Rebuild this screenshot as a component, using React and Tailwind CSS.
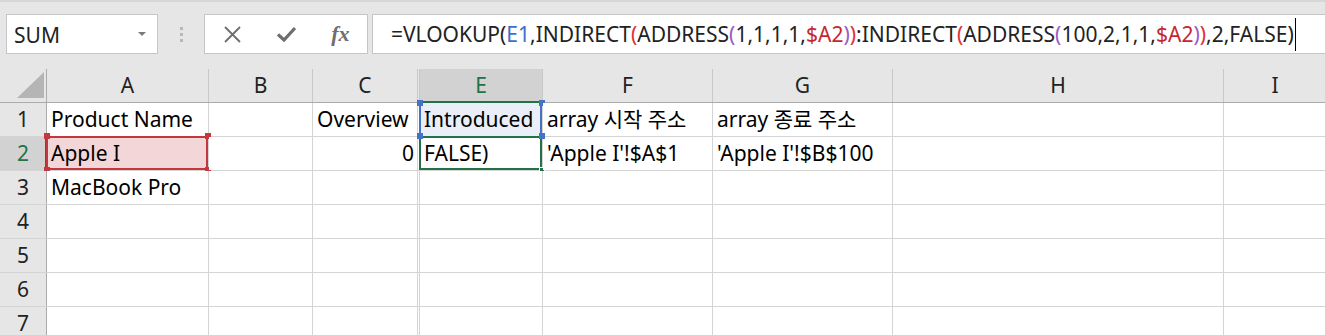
import React from 'react';

const FONT = { fontFamily: '"Noto Sans", "Noto Sans CJK KR", sans-serif' };

const columns = [
  { key: 'A', w: 'w-[162px]' },
  { key: 'B', w: 'w-[104px]' },
  { key: 'C', w: 'w-[105px]' },
  { key: 'D', w: 'w-[2px]', hidden: true },
  { key: 'E', w: 'w-[123px]' },
  { key: 'F', w: 'w-[170px]' },
  { key: 'G', w: 'w-[180px]' },
  { key: 'H', w: 'w-[331px]' },
  { key: 'I', w: 'w-[103px]' },
];

const data = {
  A1: 'Product Name',
  C1: 'Overview',
  E1: 'Introduced',
  F1: 'array 시작 주소',
  G1: 'array 종료 주소',
  A2: 'Apple I',
  C2: '0',
  E2: 'FALSE)',
  F2: "'Apple I'!$A$1",
  G2: "'Apple I'!$B$100",
  A3: 'MacBook Pro',
};

const Handle = ({ className }) => (
  <span className={`absolute w-[6px] h-[6px] ${className}`} />
);

const Cell = ({ col, row }) => {
  const id = col.key + row;
  const text = data[id];
  if (col.hidden) {
    return <div className={`${col.w} shrink-0 h-full border-r border-[#d4d4d4]`} />;
  }
  const isA2 = id === 'A2';
  const isE1 = id === 'E1';
  const isE2 = id === 'E2';
  const right = id === 'C2';
  let bg = 'bg-white';
  if (isA2) bg = 'bg-[#f3d6d8]';
  if (isE1) bg = 'bg-[#e9eef8]';
  return (
    <div
      className={`${col.w} shrink-0 h-full relative border-r border-[#d4d4d4] ${bg} flex items-center ${right ? 'justify-end pr-[3px]' : 'pl-[4px]'} whitespace-nowrap text-[21px] text-black`}
    >
      <span className="relative z-10 leading-none">{text}</span>
      {isA2 && (
        <>
          <span className="absolute -left-[1px] -top-[1px] -right-[0px] -bottom-[0px] border-2 border-[#c4373f]" />
          <Handle className="-left-[3px] -top-[4px] bg-[#c4373f]" />
          <Handle className="-right-[3px] -top-[4px] bg-[#c4373f]" />
          <Handle className="-left-[3px] -bottom-[3px] bg-[#c4373f]" />
          <Handle className="-right-[3px] -bottom-[3px] bg-[#c4373f]" />
        </>
      )}
      {isE1 && (
        <>
          <span className="absolute -left-[1px] top-0 bottom-0 w-[2px] bg-[#4472c4]" />
          <span className="absolute -right-[0px] top-0 bottom-0 w-[2px] bg-[#4472c4]" />
          <Handle className="-left-[3px] -top-[3px] bg-[#4472c4]" />
          <Handle className="-right-[3px] -top-[3px] bg-[#4472c4]" />
          <Handle className="-left-[3px] -bottom-[3px] bg-[#4472c4] z-20" />
          <Handle className="-right-[3px] -bottom-[3px] bg-[#4472c4] z-20" />
        </>
      )}
      {isE2 && (
        <>
          <span className="absolute -left-[1px] -top-[1px] right-0 bottom-0 border-2 border-[#217346]" />
          <Handle className="-right-[3px] -bottom-[3px] bg-[#217346] border border-white" />
        </>
      )}
    </div>
  );
};

const Formula = () => (
  <span>
    =VLOOKUP(<span className="text-[#3c6fca]">E1</span>,INDIRECT
    <span className="text-[#e0303a]">(</span>ADDRESS
    <span className="text-[#9a5cc6]">(</span>1,1,1,1,
    <span className="text-[#c8262e]">$A2</span>
    <span className="text-[#9a5cc6]">)</span>
    <span className="text-[#e0303a]">)</span>:INDIRECT
    <span className="text-[#e0303a]">(</span>ADDRESS
    <span className="text-[#9a5cc6]">(</span>100,2,1,1,
    <span className="text-[#c8262e]">$A2</span>
    <span className="text-[#9a5cc6]">)</span>
    <span className="text-[#e0303a]">)</span>,2,FALSE)
  </span>
);

export default function App() {
  const rows = [1, 2, 3, 4, 5, 6, 7];
  return (
    <div className="w-[1325px] h-[335px] overflow-hidden bg-white" style={FONT}>
      {/* Formula bar */}
      <div className="h-[69px] bg-[#e6e6e6] border-t-2 border-[#d6d6d6] flex items-start pt-[12px] pl-[6px]">
        <div className="w-[152px] h-[40px] bg-white border border-[#c6c6c6] flex items-center justify-between pl-[7px] pr-[11px]">
          <span className="text-[21px] text-[#222] pt-[3px]">SUM</span>
          <span className="w-0 h-0 border-l-[4px] border-r-[4px] border-t-[4px] border-l-transparent border-r-transparent border-t-[#7a7a7a]" />
        </div>
        <div className="w-[46px] h-[40px] flex flex-col items-center justify-center gap-[3px]">
          <span className="w-[3px] h-[3px] bg-[#b8b8b8]" />
          <span className="w-[3px] h-[3px] bg-[#b8b8b8]" />
          <span className="w-[3px] h-[3px] bg-[#b8b8b8]" />
        </div>
        <div className="w-[164px] h-[40px] bg-white border border-[#c6c6c6] flex items-center">
          <div className="w-[55px] flex justify-center">
            <svg width="17" height="17" viewBox="0 0 17 17">
              <path d="M1 1L16 16M16 1L1 16" stroke="#6e6e6e" strokeWidth="1.8" fill="none" />
            </svg>
          </div>
          <div className="w-[55px] flex justify-center">
            <svg width="19" height="16" viewBox="0 0 19 16">
              <path d="M1 8.5L7 14L18 2" stroke="#6e6e6e" strokeWidth="3.2" fill="none" />
            </svg>
          </div>
          <div className="w-[54px] flex justify-center">
            <span className="text-[22px] italic font-bold text-[#6e6e6e] leading-none" style={{ fontFamily: '"Liberation Serif", serif' }}>
              fx
            </span>
          </div>
        </div>
        <div className="ml-[4px] flex-1 h-[40px] bg-white border border-[#c6c6c6] border-r-0 flex items-center pl-[18px] text-[21px] text-[#222] whitespace-nowrap">
          <span className="pt-[1px]">
            <Formula />
          </span>
          <span className="w-[1px] h-[33px] bg-black ml-[1px]" />
        </div>
      </div>

      {/* Column headers */}
      <div className="flex h-[34px] bg-[#e6e6e6] border-b border-[#ababab]">
        <div className="w-[47px] shrink-0 h-full border-r border-[#ababab] relative">
          <svg className="absolute left-[17px] top-[3px]" width="27" height="26" viewBox="0 0 27 26">
            <path d="M27 0L27 26L0 26Z" fill="#b5b5b5" />
          </svg>
        </div>
        {columns.map((c) =>
          c.hidden ? (
            <div key={c.key} className={`${c.w} shrink-0 h-full border-r border-[#c8c8c8]`} />
          ) : (
            <div
              key={c.key}
              className={`${c.w} shrink-0 h-full border-r border-[#c8c8c8] flex items-center justify-center text-[21px] relative ${
                c.key === 'E' ? 'bg-[#d2d2d2] text-[#217346]' : 'text-[#222]'
              }`}
            >
              <span>{c.key}</span>
              {c.key === 'E' && <span className="absolute left-0 right-0 -bottom-[1px] h-[2px] bg-[#217346]" />}
            </div>
          )
        )}
      </div>

      {/* Rows */}
      {rows.map((r) => (
        <div key={r} className="flex h-[34px] border-b border-[#d4d4d4]">
          <div
            className={`w-[47px] shrink-0 h-full border-r flex items-center justify-center text-[21px] relative ${
              r === 2 ? 'bg-[#d2d2d2] text-[#217346] border-[#217346]' : 'bg-[#e6e6e6] text-[#222] border-[#ababab]'
            }`}
          >
            <span>{r}</span>
            {r === 2 && <span className="absolute -right-[1px] top-0 bottom-0 w-[2px] bg-[#217346]" />}
          </div>
          {columns.map((c) => (
            <Cell key={c.key} col={c} row={r} />
          ))}
        </div>
      ))}
    </div>
  );
}
